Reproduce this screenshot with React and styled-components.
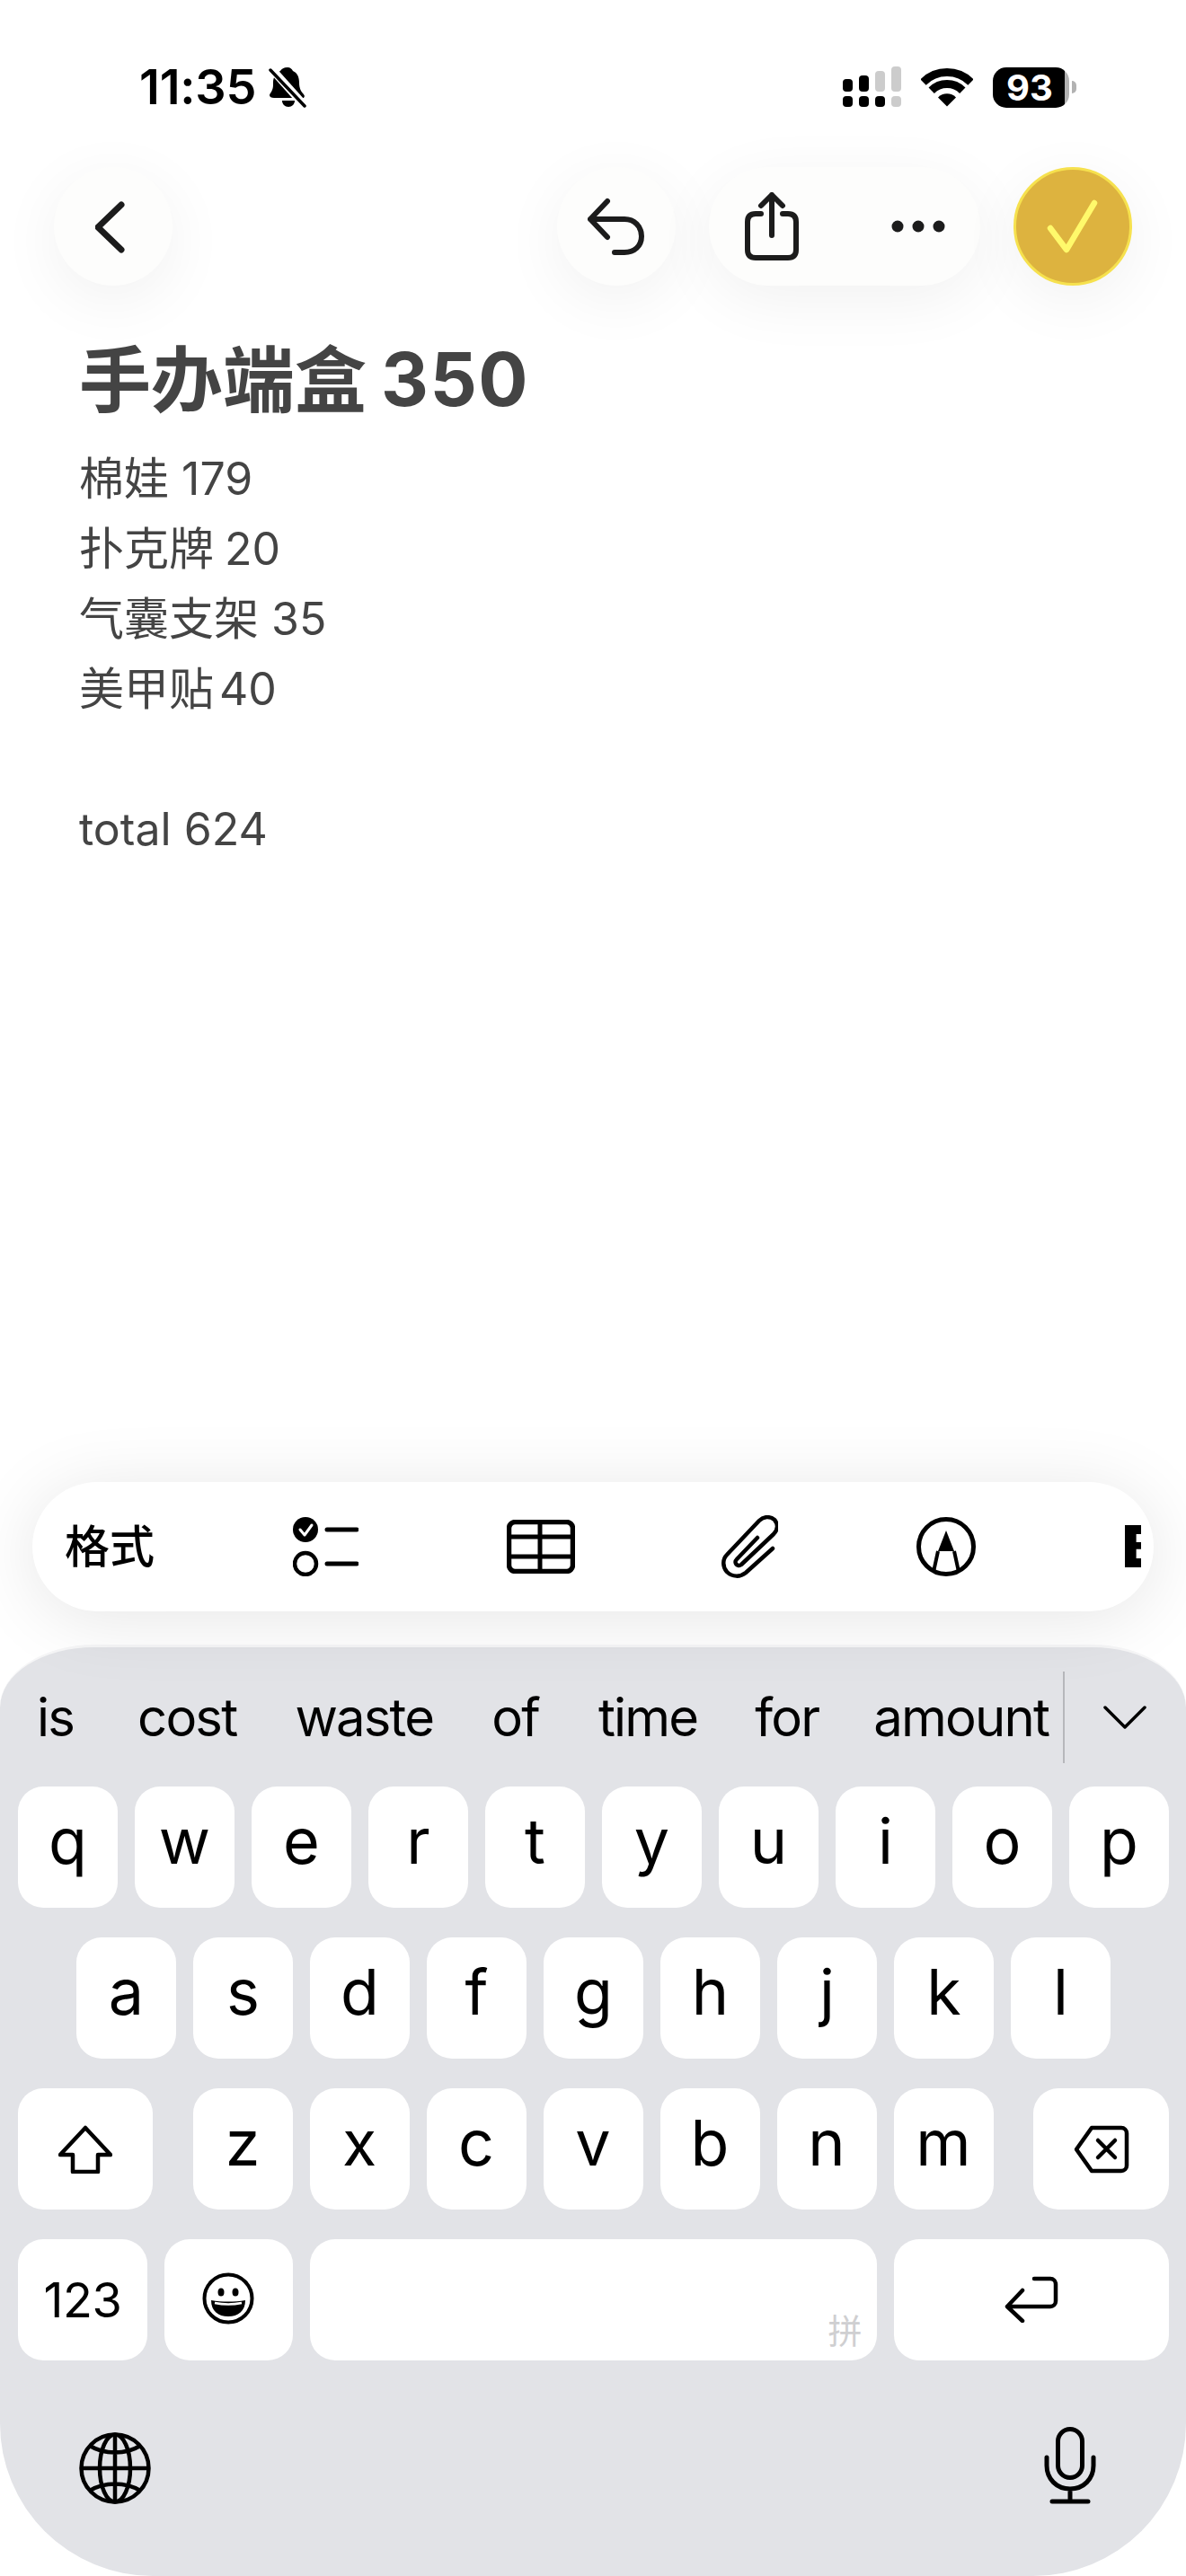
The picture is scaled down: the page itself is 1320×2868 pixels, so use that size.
import styled, { createGlobalStyle } from "styled-components";

const Global = createGlobalStyle`
  html, body { margin: 0; padding: 0; background: #fff; }
  * { box-sizing: border-box; }
`;

const Page = styled.div`
  width: 1320px;
  height: 2868px;
  display: flex;
  flex-direction: column;
  overflow: hidden;
  background: #fff;
  font-family: Inter, "Noto Sans CJK SC", sans-serif;
`;

const StatusBar = styled.div`
  height: 186px;
  flex: none;
  display: flex;
  justify-content: space-between;
  align-items: flex-start;
  padding: 74px 122px 0 155px;
`;
const TimeGroup = styled.div`
  display: flex;
  align-items: center;
  gap: 14px;
  height: 46px;
`;
const Time = styled.span`
  font-size: 54px;
  font-weight: 600;
  line-height: 46px;
  letter-spacing: -0.2px;
  color: #000;
`;
const StatusIcons = styled.div`
  display: flex;
  align-items: center;
  gap: 22px;
  height: 46px;
`;
const BatteryWrap = styled.div`
  display: flex;
  align-items: center;
  gap: 3px;
`;
const BatteryBody = styled.div`
  width: 85px;
  height: 45px;
  border-radius: 15px;
  background: linear-gradient(90deg, #000 94%, #b2b2b2 94%);
  color: #fff;
  font-size: 40px;
  font-weight: 700;
  display: flex;
  align-items: center;
  justify-content: center;
  padding-right: 3px;
`;
const BatteryNub = styled.div`
  width: 5px;
  height: 14px;
  border-radius: 0 7px 7px 0;
  background: #b2b2b2;
`;

const Nav = styled.div`
  flex: none;
  height: 132px;
  display: flex;
  justify-content: space-between;
  padding: 0 60px;
`;
const NavGroup = styled.div`
  display: flex;
  gap: 37px;
`;
const RoundButton = styled.div`
  width: 132px;
  height: 132px;
  border-radius: 50%;
  background: ${(p) => (p.$done ? "#ddb33f" : "#fdfdfc")};
  border: ${(p) => (p.$done ? "3px solid #f6e14e" : "none")};
  box-shadow: 0 16px 70px rgba(0, 0, 0, 0.06);
  display: flex;
  align-items: center;
  justify-content: center;
`;
const Pill = styled.div`
  width: 302px;
  height: 132px;
  border-radius: 66px;
  background: #fdfdfc;
  box-shadow: 0 16px 70px rgba(0, 0, 0, 0.06);
  display: flex;
  align-items: center;
  justify-content: space-between;
  padding: 0 39px 0 40px;
`;

const Note = styled.div`
  flex: 1;
  padding: 60px 88px 0;
  color: #444;
`;
const Title = styled.div`
  font-size: 80px;
  font-weight: 700;
  line-height: 90px;
  margin-bottom: 26px;
`;
const TitleNum = styled.span`
  font-size: 82px;
  letter-spacing: 1.5px;
  margin-left: -3px;
`;
const Line = styled.div`
  font-size: 50px;
  line-height: 78px;
  min-height: 78px;
  word-spacing: ${(p) => p.$space || 0}px;
`;

const Toolbar = styled.div`
  flex: none;
  height: 144px;
  margin: 0 36px 37px;
  border-radius: 72px;
  background: #fff;
  box-shadow: 0 8px 80px rgba(0, 0, 0, 0.1);
  padding: 0 14px 0 36px;
  display: flex;
  align-items: center;
  overflow: hidden;
  position: relative;
`;
const ToolStrip = styled.div`
  display: flex;
  align-items: center;
  width: 100%;
  overflow: hidden;
`;
const ToolItem = styled.div`
  flex: none;
  margin-left: ${(p) => p.$left || 0}px;
  display: flex;
  align-items: center;
`;
const ToolLabel = styled.span`
  font-size: 50px;
  font-weight: 500;
  color: #000;
  line-height: 60px;
`;
const ToolClipped = styled.span`
  font-size: 64px;
  font-weight: 900;
  color: #000;
  line-height: 60px;
`;

const Keyboard = styled.div`
  flex: none;
  height: 1037px;
  background: #e2e3e7;
  border-top: 3px solid #f6f6f7;
  border-radius: 105px 105px 170px 170px / 70px 70px 170px 170px;
`;
const Suggestions = styled.div`
  height: 155px;
  display: flex;
  align-items: center;
  padding-left: 41px;
  color: #000;
`;
const Word = styled.span`
  font-size: 58px;
  line-height: 60px;
  letter-spacing: -1.8px;
  margin-left: ${(p) => p.$left || 0}px;
`;
const Divider = styled.div`
  width: 2px;
  height: 102px;
  background: #b6b7bb;
  margin-left: 16px;
`;
const Chevron = styled.svg`
  margin-left: 43px;
`;

const KeyRows = styled.div`
  display: flex;
  flex-direction: column;
  gap: 33px;
`;
const KeyRow = styled.div`
  display: flex;
  gap: 19px;
  justify-content: ${(p) => p.$justify || "center"};
  padding: 0 19px 0 20px;
`;
const Key = styled.div`
  width: ${(p) => p.$w || 111}px;
  height: 135px;
  border-radius: 28px;
  background: #fff;
  color: #000;
  font-size: 70px;
  line-height: 70px;
  display: flex;
  justify-content: center;
  align-items: ${(p) => (p.$icon ? "center" : "flex-start")};
  padding-top: ${(p) => (p.$icon ? 0 : 26)}px;
`;
const IconKey = styled(Key)`
  padding-bottom: ${(p) => p.$lift || 0}px;
`;
const NumKey = styled(Key)`
  font-size: 54px;
  letter-spacing: -0.5px;
  line-height: 135px;
  padding-top: 0;
`;
const SpaceKey = styled(Key)`
  justify-content: flex-end;
  align-items: flex-end;
  padding: 0 16px 13px 0;
`;
const SpaceHint = styled.span`
  font-size: 38px;
  line-height: 40px;
  color: #cfcfd1;
`;
const BottomBar = styled.div`
  display: flex;
  justify-content: space-between;
  align-items: flex-end;
  padding: 74px 100px 0 88px;
`;
const LetterGroup = styled.div`
  display: flex;
  gap: 19px;
`;

const BellIcon = () => (
  <svg width="42" height="46" viewBox="0 0 42 46">
    <path d="M21 1c3 0 5 2 6 4 5 2 7 7 7 13 0 6 2 10 5 13l1 2-1 2H6c-3 0-5-1-5-3 0-2 2-3 3-6 1-2 1-5 1-8 0-6 3-11 8-13 1-2 4-4 8-4z" fill="#000" />
    <path d="M15 38h14c0 4-3 7-7 7s-7-3-7-7z" fill="#000" />
    <line x1="-1" y1="-2" x2="42" y2="46" stroke="#fff" strokeWidth="9" />
    <line x1="2" y1="4" x2="40" y2="44" stroke="#000" strokeWidth="3.5" strokeLinecap="round" />
  </svg>
);

const SignalIcon = () => (
  <svg width="65" height="46" viewBox="0 0 65 46">
    <rect x="0" y="14" width="11" height="14" rx="4" fill="#000" />
    <rect x="18" y="10" width="11" height="18" rx="4" fill="#000" />
    <rect x="36" y="5" width="11" height="23" rx="4" fill="#ccc" />
    <rect x="54" y="0" width="11" height="28" rx="4" fill="#ccc" />
    <rect x="0" y="33" width="11" height="12" rx="4" fill="#000" />
    <rect x="18" y="33" width="11" height="12" rx="4" fill="#000" />
    <rect x="36" y="33" width="11" height="12" rx="4" fill="#000" />
    <rect x="54" y="33" width="11" height="12" rx="4" fill="#ccc" />
  </svg>
);

const WifiIcon = () => (
  <svg width="58" height="43" viewBox="0 0 58 43">
    <path d="M2.5 15.5a37.5 37.5 0 0 1 53 0" fill="none" stroke="#000" strokeWidth="9" />
    <path d="M11.7 24.7a24.5 24.5 0 0 1 34.6 0" fill="none" stroke="#000" strokeWidth="9" />
    <path d="M29 42.5 19 32.5a14 14 0 0 1 20 0z" fill="#000" />
  </svg>
);

const ChevronLeft = () => (
  <svg width="40" height="60" viewBox="0 0 40 60">
    <path d="M29 6 3 31l26 25" fill="none" stroke="#1c1c1c" strokeWidth="7" strokeLinecap="round" strokeLinejoin="round" />
  </svg>
);

const UndoIcon = () => (
  <svg width="64" height="64" viewBox="0 0 64 64">
    <path d="M22 4 3 24l19 20M3 24h38c11 0 19 8 19 19s-8 18-19 18H30" fill="none" stroke="#1c1c1c" strokeWidth="6" strokeLinecap="round" strokeLinejoin="round" />
  </svg>
);

const ShareIcon = () => (
  <svg width="60" height="76" viewBox="0 0 60 76">
    <path d="M18 24h-6c-6 0-9 3-9 9v31c0 6 3 9 9 9h36c6 0 9-3 9-9V33c0-6-3-9-9-9h-6" fill="none" stroke="#1c1c1c" strokeWidth="6" strokeLinecap="round" />
    <path d="M30 48V3M18 15 30 3l12 12" fill="none" stroke="#1c1c1c" strokeWidth="6" strokeLinecap="round" strokeLinejoin="round" />
  </svg>
);

const DotsIcon = () => (
  <svg width="60" height="14" viewBox="0 0 60 14">
    <circle cx="7" cy="7" r="6.5" fill="#1c1c1c" />
    <circle cx="30" cy="7" r="6.5" fill="#1c1c1c" />
    <circle cx="53" cy="7" r="6.5" fill="#1c1c1c" />
  </svg>
);

const CheckIcon = () => (
  <svg width="60" height="60" viewBox="0 0 60 60">
    <path d="M5 32l18 24L54 4" fill="none" stroke="#fff96b" strokeWidth="6.5" strokeLinecap="round" strokeLinejoin="round" />
  </svg>
);

const ChecklistIcon = () => (
  <svg width="73" height="66" viewBox="0 0 73 66">
    <circle cx="14" cy="14" r="14" fill="#000" />
    <path d="M8 14l5 6 8-11" fill="none" stroke="#fff" strokeWidth="3" strokeLinecap="round" strokeLinejoin="round" />
    <circle cx="14" cy="52" r="12" fill="none" stroke="#000" strokeWidth="4.5" />
    <path d="M38 14h33M38 52h33" stroke="#000" strokeWidth="5" strokeLinecap="round" />
  </svg>
);

const TableIcon = () => (
  <svg width="76" height="60" viewBox="0 0 76 60">
    <rect x="2.5" y="2.5" width="71" height="55" rx="7" fill="none" stroke="#000" strokeWidth="5.5" />
    <path d="M2 19h72M2 41h72M37 2v56" stroke="#000" strokeWidth="5" />
  </svg>
);

const ClipIcon = () => (
  <svg width="63" height="70" viewBox="0 0 63 70">
    <path d="M57 37 27 64c-6 5-15 5-21-1-5-6-5-14 0-19L42 6c5-5 12-5 17-1 4 5 4 11-1 16L22 55c-4 3-9-2-5-6l23-24" fill="none" stroke="#000" strokeWidth="4.5" strokeLinecap="round" strokeLinejoin="round" />
  </svg>
);

const MarkupIcon = () => (
  <svg width="66" height="66" viewBox="0 0 66 66">
    <circle cx="33" cy="33" r="30.5" fill="none" stroke="#000" strokeWidth="5" />
    <path d="M33 15l-9 23h18z" fill="#000" />
    <path d="M24 38l-5 23M42 38l5 23" stroke="#000" strokeWidth="4" />
  </svg>
);

const ShiftIcon = () => (
  <svg width="60" height="54" viewBox="0 0 60 54">
    <path d="M30 3 58 33H44v19H16V33H2z" fill="none" stroke="#000" strokeWidth="4.5" strokeLinejoin="round" />
  </svg>
);

const DeleteIcon = () => (
  <svg width="62" height="54" viewBox="0 0 62 54">
    <path d="M20 3h33a6 6 0 0 1 6 6v36a6 6 0 0 1-6 6H20L3 27z" fill="none" stroke="#000" strokeWidth="4.5" strokeLinejoin="round" />
    <path d="M27 17l19 19M46 17 27 36" stroke="#000" strokeWidth="4.5" strokeLinecap="round" />
  </svg>
);

const ReturnIcon = () => (
  <svg width="60" height="52" viewBox="0 0 60 52">
    <path d="M33 3h18a6 6 0 0 1 6 6v19a6 6 0 0 1-6 6H3M20 16 3 34l17 16" fill="none" stroke="#000" strokeWidth="4.5" strokeLinecap="round" strokeLinejoin="round" />
  </svg>
);

const EmojiIcon = () => (
  <svg width="58" height="58" viewBox="0 0 58 58">
    <circle cx="29" cy="29" r="26.5" fill="none" stroke="#000" strokeWidth="4" />
    <ellipse cx="21" cy="22" rx="3.5" ry="4.5" fill="#000" />
    <ellipse cx="37" cy="22" rx="3.5" ry="4.5" fill="#000" />
    <path d="M10 31c12 2 26 2 38 0 0 12-8 18-19 18s-19-6-19-18z" fill="#000" />
    <path d="M14 34c10 2 20 2 30 0" fill="none" stroke="#fff" strokeWidth="2.5" />
  </svg>
);

const GlobeIcon = () => (
  <svg width="80" height="80" viewBox="0 0 80 80">
    <g fill="none" stroke="#000" strokeWidth="4.5">
      <circle cx="40" cy="40" r="37.5" />
      <ellipse cx="40" cy="40" rx="17" ry="37.5" />
      <path d="M40 2v76M2 40h76M12 15c16 10 40 10 56 0M12 65c16-10 40-10 56 0" />
    </g>
  </svg>
);

const MicIcon = () => (
  <svg width="58" height="86" viewBox="0 0 58 86">
    <rect x="15.5" y="2.5" width="27" height="54" rx="13.5" fill="none" stroke="#000" strokeWidth="5" />
    <path d="M3 34v9c0 15 11 26 26 26s26-11 26-26v-9M29 69v14M9 83h40" fill="none" stroke="#000" strokeWidth="5" strokeLinecap="round" />
  </svg>
);

const suggestions = [
  ["is", 0],
  ["cost", 71],
  ["waste", 65],
  ["of", 65],
  ["time", 66],
  ["for", 64],
  ["amount", 61],
];
const row1 = ["q", "w", "e", "r", "t", "y", "u", "i", "o", "p"];
const row2 = ["a", "s", "d", "f", "g", "h", "j", "k", "l"];
const row3 = ["z", "x", "c", "v", "b", "n", "m"];
const noteLines = [
  ["棉娃 179", 0],
  ["扑克牌 20", -2],
  ["气囊支架 35", 0],
  ["美甲贴 40", -8],
  ["", 0],
  ["total 624", 0],
];

export default function App() {
  return (
    <Page>
      <Global />
      <StatusBar>
        <TimeGroup>
          <Time>11:35</Time>
          <BellIcon />
        </TimeGroup>
        <StatusIcons>
          <SignalIcon />
          <WifiIcon />
          <BatteryWrap>
            <BatteryBody>93</BatteryBody>
            <BatteryNub />
          </BatteryWrap>
        </StatusIcons>
      </StatusBar>

      <Nav>
        <RoundButton>
          <ChevronLeft />
        </RoundButton>
        <NavGroup>
          <RoundButton>
            <UndoIcon />
          </RoundButton>
          <Pill>
            <ShareIcon />
            <DotsIcon />
          </Pill>
          <RoundButton $done>
            <CheckIcon />
          </RoundButton>
        </NavGroup>
      </Nav>

      <Note>
        <Title>
          手办端盒 <TitleNum>350</TitleNum>
        </Title>
        {noteLines.map(([text, space], i) => (
          <Line key={i} $space={space}>
            {text}
          </Line>
        ))}
      </Note>

      <Toolbar>
        <ToolStrip>
          <ToolItem>
            <ToolLabel>格式</ToolLabel>
          </ToolItem>
          <ToolItem $left={154}>
            <ChecklistIcon />
          </ToolItem>
          <ToolItem $left={165}>
            <TableIcon />
          </ToolItem>
          <ToolItem $left={163}>
            <ClipIcon />
          </ToolItem>
          <ToolItem $left={154}>
            <MarkupIcon />
          </ToolItem>
          <ToolItem $left={163}>
            <ToolClipped>B</ToolClipped>
          </ToolItem>
        </ToolStrip>
      </Toolbar>

      <Keyboard>
        <Suggestions>
          {suggestions.map(([w, left]) => (
            <Word key={w} $left={left}>
              {w}
            </Word>
          ))}
          <Divider />
          <Chevron width="48" height="26" viewBox="0 0 48 26">
            <path d="M2 2l22 22L46 2" fill="none" stroke="#000" strokeWidth="3.5" strokeLinecap="round" strokeLinejoin="round" />
          </Chevron>
        </Suggestions>
        <KeyRows>
          <KeyRow>
            {row1.map((k) => (
              <Key key={k}>{k}</Key>
            ))}
          </KeyRow>
          <KeyRow>
            {row2.map((k) => (
              <Key key={k}>{k}</Key>
            ))}
          </KeyRow>
          <KeyRow $justify="space-between">
            <IconKey $w={150} $icon>
              <ShiftIcon />
            </IconKey>
            <LetterGroup>
              {row3.map((k) => (
                <Key key={k}>{k}</Key>
              ))}
            </LetterGroup>
            <IconKey $w={151} $icon>
              <DeleteIcon />
            </IconKey>
          </KeyRow>
          <KeyRow $justify="space-between">
            <NumKey $w={144}>123</NumKey>
            <IconKey $w={143} $icon $lift={4}>
              <EmojiIcon />
            </IconKey>
            <SpaceKey $w={632}>
              <SpaceHint>拼</SpaceHint>
            </SpaceKey>
            <IconKey $w={307} $icon $lift={2}>
              <ReturnIcon />
            </IconKey>
          </KeyRow>
        </KeyRows>
        <BottomBar>
          <GlobeIcon />
          <MicIcon />
        </BottomBar>
      </Keyboard>
    </Page>
  );
}
